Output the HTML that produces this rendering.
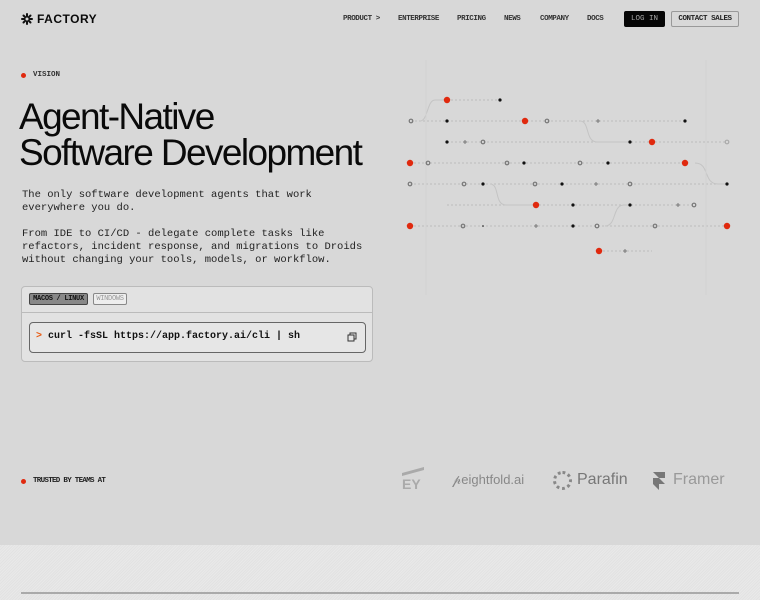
<!DOCTYPE html>
<html><head><meta charset="utf-8"><style>
*{margin:0;padding:0;box-sizing:border-box}
body{width:760px;height:600px;overflow:hidden;background:#d8d8d8;font-family:"Liberation Sans",sans-serif;position:relative;color:#0a0a0a}
.abs{position:absolute}
.mono{font-family:"Liberation Mono",monospace}
.nav{font-family:"Liberation Mono",monospace;font-size:7.5px;font-weight:bold;color:#333;top:15px;letter-spacing:-0.4px}
.dot{width:5px;height:5px;border-radius:50%;background:#e0290e}
</style></head><body>
<div class="abs" style="left:21px;top:12px;font-weight:bold;font-size:12px;letter-spacing:0.5px;display:flex;align-items:center;gap:4px">
<svg width="12" height="12" viewBox="0 0 12 12"><g stroke="#111" stroke-width="2" stroke-linecap="round"><line x1="6" y1="1" x2="6" y2="11"/><line x1="1" y1="6" x2="11" y2="6"/><line x1="2.5" y1="2.5" x2="9.5" y2="9.5"/><line x1="9.5" y1="2.5" x2="2.5" y2="9.5"/></g><circle cx="6" cy="6" r="1.5" fill="#d8d8d8"/></svg>FACTORY</div>
<div class="abs nav" style="left:343px">PRODUCT &gt;</div>
<div class="abs nav" style="left:398px">ENTERPRISE</div>
<div class="abs nav" style="left:457px">PRICING</div>
<div class="abs nav" style="left:504px">NEWS</div>
<div class="abs nav" style="left:540px">COMPANY</div>
<div class="abs nav" style="left:587px">DOCS</div>
<div class="abs mono" style="left:624px;top:11px;width:41px;height:16px;background:#060606;border-radius:2px;color:#aaa;font-size:7.5px;text-align:center;line-height:16px">LOG IN</div>
<div class="abs mono" style="left:671px;top:11px;width:68px;height:16px;border:1px solid #999;border-radius:2px;color:#222;font-size:7.5px;font-weight:bold;text-align:center;line-height:14px;letter-spacing:-0.4px">CONTACT SALES</div>

<div class="abs dot" style="left:21px;top:73px"></div>
<div class="abs mono" style="left:33px;top:71px;font-size:7.5px;font-weight:bold;color:#333">VISION</div>
<div class="abs" style="left:19px;top:99px;font-size:37px;letter-spacing:-1.6px;line-height:36px">Agent-Native<br>Software Development</div>
<div class="abs mono" style="left:22px;top:189px;font-size:10.5px;line-height:13px;color:#222;white-space:pre">The only software development agents that work
everywhere you do.

From IDE to CI/CD - delegate complete tasks like
refactors, incident response, and migrations to Droids
without changing your tools, models, or workflow.</div>

<div class="abs" style="left:21px;top:286px;width:352px;height:76px;border:1px solid #bbb;border-radius:4px;background:#e2e2e2"></div>
<div class="abs" style="left:22px;top:312px;width:350px;height:1px;background:#bbb"></div>
<div class="abs mono" style="left:29px;top:293px;width:59px;height:12px;background:#888;border:1px solid #444;border-radius:2px;font-size:7px;font-weight:bold;color:#111;text-align:center;line-height:10px;letter-spacing:-0.3px">MACOS / LINUX</div>
<div class="abs mono" style="left:93px;top:293px;width:34px;height:12px;border:1px solid #888;border-radius:2px;font-size:7px;color:#999;text-align:center;line-height:10px;background:#eee;letter-spacing:-0.3px">WINDOWS</div>
<div class="abs" style="left:29px;top:322px;width:337px;height:31px;border:1px solid #666;border-radius:4px;background:#e6e6e6"></div>
<div class="abs mono" style="left:36px;top:331px;font-size:10px;font-weight:bold;color:#111"><span style="color:#e8580e">&gt;</span> curl -fsSL https://app.factory.ai/cli | sh</div>
<svg class="abs" style="left:347px;top:332px" width="10" height="10" viewBox="0 0 10 10"><rect x="1" y="3" width="6" height="6" fill="none" stroke="#333"/><path d="M3 3V1h6v6H7" fill="none" stroke="#333"/></svg>

<svg class="abs" style="left:0;top:0" width="760" height="300">
<g stroke="#bdbdbd" stroke-width="1" stroke-dasharray="2 2" fill="none">
<line x1="447" y1="100" x2="500" y2="100"/>
<line x1="411" y1="121" x2="685" y2="121"/>
<line x1="447" y1="142" x2="727" y2="142"/>
<line x1="410" y1="163" x2="685" y2="163"/>
<line x1="410" y1="184" x2="727" y2="184"/>
<line x1="447" y1="205" x2="694" y2="205"/>
<line x1="410" y1="226" x2="727" y2="226"/>
<line x1="599" y1="251" x2="652" y2="251"/>
</g>
<g stroke="#c4c4c4" stroke-width="1" fill="none">
<path d="M420 121 C428 121 427 100 435 100 H447"/>
<path d="M580 121 C590 121 585 142 597 142 H630"/>
<path d="M695 163 C710 163 703 184 718 184 H727"/>
<path d="M490 184 C500 184 494 205 506 205 H536"/>
<path d="M605 226 C617 226 612 205 624 205 H630"/>
<line x1="426" y1="60" x2="426" y2="295" stroke="#d2d2d2"/>
<line x1="706" y1="60" x2="706" y2="295" stroke="#d2d2d2"/>
</g>
<g fill="#e0290e">
<circle cx="447" cy="100" r="3.2"/><circle cx="525" cy="121" r="3.2"/><circle cx="652" cy="142" r="3.2"/>
<circle cx="410" cy="163" r="3.2"/><circle cx="685" cy="163" r="3.2"/><circle cx="536" cy="205" r="3.2"/>
<circle cx="410" cy="226" r="3.2"/><circle cx="727" cy="226" r="3.2"/><circle cx="599" cy="251" r="3.2"/>
</g>
<g fill="#111">
<circle cx="500" cy="100" r="1.6"/><circle cx="447" cy="121" r="1.6"/><circle cx="685" cy="121" r="1.6"/>
<circle cx="447" cy="142" r="1.6"/><circle cx="630" cy="142" r="1.6"/><circle cx="524" cy="163" r="1.6"/>
<circle cx="608" cy="163" r="1.6"/><circle cx="483" cy="184" r="1.6"/><circle cx="562" cy="184" r="1.6"/>
<circle cx="727" cy="184" r="1.6"/><circle cx="573" cy="205" r="1.6"/><circle cx="630" cy="205" r="1.6"/>
<circle cx="573" cy="226" r="1.6"/><circle cx="483" cy="226" r="0.8"/>
</g>
<g fill="none" stroke="#777" stroke-width="1.2">
<circle cx="411" cy="121" r="1.8"/><circle cx="547" cy="121" r="1.8"/><circle cx="483" cy="142" r="1.8"/>
<circle cx="727" cy="142" r="1.8" stroke="#aaa"/><circle cx="428" cy="163" r="1.8"/><circle cx="507" cy="163" r="1.8"/>
<circle cx="580" cy="163" r="1.8"/><circle cx="410" cy="184" r="1.8"/><circle cx="464" cy="184" r="1.8"/>
<circle cx="535" cy="184" r="1.8"/><circle cx="630" cy="184" r="1.8"/><circle cx="694" cy="205" r="1.8"/>
<circle cx="463" cy="226" r="1.8"/><circle cx="597" cy="226" r="1.8"/><circle cx="655" cy="226" r="1.8"/>
</g>
<g stroke="#777" stroke-width="1">
<path d="M596 121h4M598 119v4M463 142h4M465 140v4M594 184h4M596 182v4M676 205h4M678 203v4M534 226h4M536 224v4M623 251h4M625 249v4"/>
</g>
</svg>

<div class="abs dot" style="left:21px;top:479px"></div>
<div class="abs mono" style="left:33px;top:477px;font-size:7.5px;font-weight:bold;color:#222;letter-spacing:-0.7px">TRUSTED BY TEAMS AT</div>
<div class="abs" style="left:402px;top:476px;font-weight:bold;font-size:14px;color:#aaa">EY</div>
<div class="abs" style="left:402px;top:470px;width:22px;height:3px;background:#aaa;transform:skewY(-15deg)"></div>
<div class="abs" style="left:452px;top:472px;font-size:13px;color:#888">&#x1D4C5;eightfold.ai</div>
<div class="abs" style="left:553px;top:471px;width:19px;height:19px;border:3px dotted #888;border-radius:50%"></div>
<div class="abs" style="left:577px;top:471px;font-size:16px;color:#777">Parafin</div>
<svg class="abs" style="left:652px;top:471px" width="14" height="20" viewBox="0 0 14 20"><path d="M1 1h12v6H7zM1 7h6l6 6H7v6l-6-6z" fill="#777"/></svg>
<div class="abs" style="left:673px;top:471px;font-size:16px;color:#999">Framer</div>

<div class="abs" style="left:0;top:545px;width:760px;height:55px;background:repeating-linear-gradient(135deg,#e9e9e9 0 1px,#e2e2e2 1px 2px)"></div>
<div class="abs" style="left:21px;top:592px;width:718px;height:2px;background:#aaa"></div>
</body></html>
